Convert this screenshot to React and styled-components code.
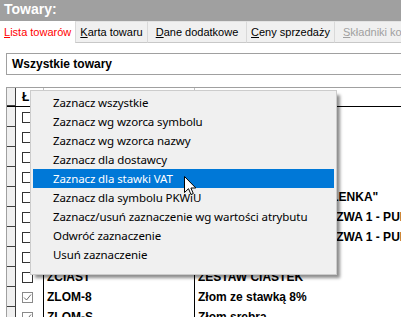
import React from 'react';
import styled, { createGlobalStyle } from 'styled-components';

const GlobalStyle = createGlobalStyle`
  html, body {
    margin: 0;
    padding: 0;
    background: #fff;
    overflow: hidden;
  }
`;

const Window = styled.div`
  position: relative;
  width: 401px;
  height: 317px;
  overflow: hidden;
  background: #fff;
  font-family: 'Liberation Sans', Arial, sans-serif;
`;

const TitleBar = styled.div`
  height: 21px;
  background: #a0a0a0;
  color: #fff;
  font-weight: bold;
  font-size: 14px;
  line-height: 19px;
  padding-left: 4px;
`;

const TabBar = styled.div`
  display: flex;
  height: 22px;
  white-space: nowrap;
`;

const Tab = styled.div`
  flex: none;
  box-sizing: border-box;
  width: ${p => p.$w}px;
  height: 22px;
  font-size: 11px;
  line-height: 20px;
  background: ${p => (p.$active ? '#fff' : '#f0f0f0')};
  color: ${p => (p.$active ? '#ff0000' : p.$disabled ? '#a0a0a0' : '#000')};
  border: 1px solid ${p => (p.$active ? 'transparent' : '#d9d9d9')};
  border-top-color: ${p => (p.$active ? 'transparent' : '#e3e3e3')};
  border-bottom-color: ${p => (p.$active ? 'transparent' : '#c8c8c8')};
  margin-left: -1px;
  overflow: hidden;
  text-align: ${p => (p.$left ? 'left' : 'center')};
  padding-left: ${p => (p.$left ? 8 : 0)}px;

  &:first-child {
    margin-left: 0;
    text-align: left;
    padding-left: 3px;
  }

  u {
    text-decoration: underline;
    text-underline-offset: 1px;
  }
`;

const Content = styled.div`
  padding: 10px 0 0 6px;
`;

const FilterBox = styled.div`
  height: 20px;
  margin-right: -10px;
  border: 1px solid #a0a0a0;
  font-weight: bold;
  font-size: 12px;
  line-height: 20px;
  padding-left: 5px;
`;

const Grid = styled.div`
  margin-top: 12px;
  margin-right: -10px;
  border-top: 1px solid #a0a0a0;
  border-left: 1px solid #a0a0a0;
`;

const Row = styled.div`
  display: grid;
  grid-template-columns: 9px 27px 151px 1fr;
  height: ${p => (p.$header ? 18 : 20)}px;
  border-bottom: ${p => (p.$header ? '1px solid #000' : 'none')};
  font-weight: bold;
  font-size: 12px;
  line-height: ${p => (p.$header ? 18 : 20)}px;
  white-space: nowrap;
`;

const RowHead = styled.div`
  background: #f0f0f0;
  border-right: 1px solid #404040;
  border-bottom: 1px solid #404040;
  box-sizing: border-box;
`;

const CheckCell = styled.div`
  display: flex;
  align-items: center;
  padding-left: 6px;
`;

const Check = styled.div`
  box-sizing: border-box;
  width: 11px;
  height: 11px;
  background: #fff;
  border: 1px solid ${p => (p.$on ? '#8a8a8a' : '#333')};
  display: flex;
  align-items: center;
  justify-content: center;
`;

const Cell = styled.div`
  border-left: 1px solid ${p => (p.$header ? '#c0c0c0' : '#000')};
  padding-left: 3px;
  overflow: hidden;
`;

const Menu = styled.div`
  position: absolute;
  left: 30px;
  top: 90px;
  width: 301px;
  padding: 2px 2px 10px 2px;
  background: #f0f0f0;
  border: 1px solid #cccccc;
  box-shadow: 4px 4px 3px -1px rgba(0, 0, 0, 0.45);
  font-family: 'Noto Sans', 'Open Sans', sans-serif;
  font-size: 11.5px;
`;

const MenuItem = styled.div`
  height: 19px;
  line-height: 19px;
  padding-left: 20px;
  white-space: nowrap;
  letter-spacing: -0.1px;
  background: ${p => (p.$hot ? '#0078d7' : 'transparent')};
  color: ${p => (p.$hot ? '#fff' : '#000')};
`;

const Cursor = styled.svg`
  position: absolute;
  left: 184px;
  top: 176px;
`;

const tabs = [
  { label: 'Lista towarów', w: 76, active: true },
  { label: 'Karta towaru', w: 73 },
  { label: 'Dane dodatkowe', w: 100 },
  { label: 'Ceny sprzedaży', w: 89 },
  { label: 'Składniki kompletu', w: 80, disabled: true, left: true },
];

const rows = [
  { sym: 'BUL-01', name: 'Bułka kajzerka' },
  { sym: 'CHL-02', name: 'Chleb wiejski' },
  { sym: 'CIA-03', name: 'Ciasto drożdżowe' },
  { sym: 'CIA-04', name: 'Ciasto z kruszonką' },
  { sym: 'CIA-05', name: 'CIASTKA KRUCHE "HELENKA"' },
  { sym: 'TOW-01', name: 'TOWARY TESTOWE, NAZWA 1 - PUDEŁKO' },
  { sym: 'TOW-02', name: 'TOWARY TESTOWE, NAZWA 1 - PUDEŁKO' },
  { sym: 'ZAK-01', name: 'Zakwas' },
  { sym: 'ZCIAST', name: 'ZESTAW CIASTEK' },
  { sym: 'ZLOM-8', name: 'Złom ze stawką 8%', on: true },
  { sym: 'ZLOM-S', name: 'Złom srebra', on: true },
];

const menu = [
  'Zaznacz wszystkie',
  'Zaznacz wg wzorca symbolu',
  'Zaznacz wg wzorca nazwy',
  'Zaznacz dla dostawcy',
  'Zaznacz dla stawki VAT',
  'Zaznacz dla symbolu PKWiU',
  'Zaznacz/usuń zaznaczenie wg wartości atrybutu',
  'Odwróć zaznaczenie',
  'Usuń zaznaczenie',
];

const Tick = () => (
  <svg width="9" height="9" viewBox="0 0 9 9">
    <path d="M1 4.5 L3.5 7 L8 1.5" fill="none" stroke="#6e6e6e" strokeWidth="1" />
  </svg>
);

export default function App() {
  return (
    <Window>
      <GlobalStyle />
      <TitleBar>Towary:</TitleBar>
      <TabBar>
        {tabs.map(t => (
          <Tab key={t.label} $w={t.w} $active={t.active} $disabled={t.disabled} $left={t.left}>
            <u>{t.label[0]}</u>
            {t.label.slice(1)}
          </Tab>
        ))}
      </TabBar>
      <Content>
        <FilterBox>Wszystkie towary</FilterBox>
        <Grid>
          <Row $header>
            <RowHead />
            <CheckCell>Ł</CheckCell>
            <Cell $header>Symbol</Cell>
            <Cell $header>Nazwa</Cell>
          </Row>
          {rows.map(r => (
            <Row key={r.sym}>
              <RowHead />
              <CheckCell>
                <Check $on={r.on}>{r.on && <Tick />}</Check>
              </CheckCell>
              <Cell>{r.sym}</Cell>
              <Cell>{r.name}</Cell>
            </Row>
          ))}
        </Grid>
      </Content>
      <Menu>
        {menu.map((m, i) => (
          <MenuItem key={m} $hot={i === 4}>
            {m}
          </MenuItem>
        ))}
      </Menu>
      <Cursor width="13" height="20" viewBox="0 0 13 20">
        <path
          d="M0.5 0.5 L0.5 16.5 L4.5 12.7 L7 18.5 L9.3 17.5 L6.9 12 L11.8 12 Z"
          fill="#fff"
          stroke="#000"
          strokeWidth="1"
          strokeLinejoin="miter"
        />
      </Cursor>
    </Window>
  );
}
